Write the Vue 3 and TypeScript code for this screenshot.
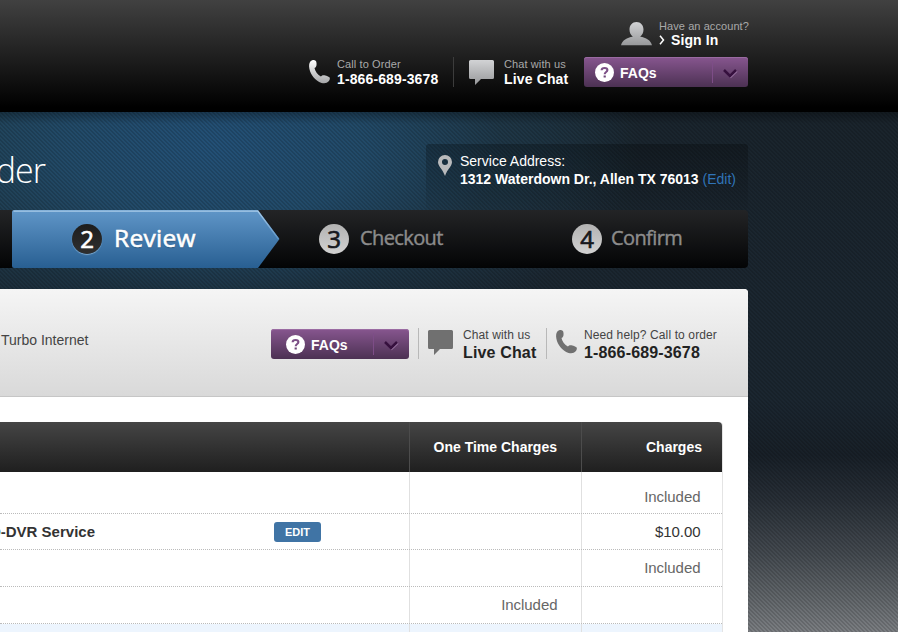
<script setup lang="ts">
interface ChargeRow {
  name: string
  editable: boolean
  once: string
  monthly: string
  height: number
}

interface Step {
  num: number
  label: string
  kind: string
}

const steps: Step[] = [
  { num: 2, label: 'Review', kind: 'active' },
  { num: 3, label: 'Checkout', kind: 'third' },
  { num: 4, label: 'Confirm', kind: 'fourth' },
]

const rows: ChargeRow[] = [
  { name: '', editable: false, once: '', monthly: 'Included', height: 42 },
  { name: 'D-DVR Service', editable: true, once: '', monthly: '$10.00', height: 36 },
  { name: '', editable: false, once: '', monthly: 'Included', height: 37 },
  { name: '', editable: false, once: 'Included', monthly: '', height: 37 },
  { name: '', editable: false, once: '', monthly: '', height: 37 },
]
</script>

<template>
  <div class="page">
    <header class="top">
      <div class="account">
        <svg class="user" width="31" height="24" viewBox="0 0 31 24">
          <defs>
            <linearGradient id="silver" x1="0" y1="0" x2="0" y2="1">
              <stop offset="0" stop-color="#d2d3d5" /><stop offset="1" stop-color="#97989a" />
            </linearGradient>
          </defs>
          <path fill="url(#silver)" d="M15.500 0c4.200 0 7 3.200 7 7.600 0 3-1.300 5.700-3.300 7.200C25 15.400 29.800 18.500 31 23.300H0c1.200-4.800 6-7.900 11.800-8.500C9.800 13.300 8.500 10.600 8.500 7.600 8.500 3.200 11.300 0 15.500 0z" />
        </svg>
        <div class="pair">
          <span class="small have">Have an account?</span>
          <span class="strong signin">
            <svg width="6" height="10" viewBox="0 0 6 10"><path d="M1 .7 4.500 5 1 9.300" fill="none" stroke="#fff" stroke-width="1.500" /></svg>
            Sign In
          </span>
        </div>
      </div>
      <div class="help">
        <svg class="phone" width="21" height="24" viewBox="0 0 21 24">
          <defs>
            <linearGradient id="handset" x1="0" y1="0" x2="0" y2="1">
              <stop offset="0" stop-color="#fff" /><stop offset="1" stop-color="#a5a6a8" />
            </linearGradient>
          </defs>
          <path fill="url(#handset)" d="M3.200.3C5.600-.3 7.300.5 7.500 3c.2 2.400-.1 4.200-2 5 .6 3.400 3.300 6.900 6.400 8.600 1.100-1.300 2.100-1.700 3.600-1.300 1.700.4 3.500 1.200 4.900 2 .9.800.4 2.600-.7 4-2.100 2.600-6.300 2.300-9.600.6C4.400 18.900.4 12.800.1 6.600 0 3.600.8 1.100 3.200.3z" />
        </svg>
        <div class="pair call">
          <span class="small order">Call to Order</span>
          <span class="strong number">1-866-689-3678</span>
        </div>
        <svg class="bubble" width="25" height="25" viewBox="0 0 25 25">
          <path fill="url(#silver)" d="M1.500 0h22A1.500 1.500 0 0 1 25 1.500v16a1.500 1.500 0 0 1-1.500 1.500H12l-6 6v-6H1.500A1.500 1.500 0 0 1 0 17.500v-16A1.500 1.500 0 0 1 1.500 0z" />
        </svg>
        <div class="pair chat">
          <span class="small with">Chat with us</span>
          <span class="strong live">Live Chat</span>
        </div>
        <button class="faq wide">
          <svg class="q" width="19" height="19" viewBox="0 0 19 19"><circle cx="9.500" cy="9.500" r="9.500" fill="#fff" /><path d="M6.600 7.300c.1-1.600 1.300-2.300 3-2.300 1.700 0 2.800.8 2.800 2.100 0 1.900-2.700 1.900-2.700 4.100" fill="none" stroke="#7d5087" stroke-width="2.100" /><rect x="8.600" y="12.500" width="2.200" height="2" fill="#6d4577" /></svg>
          <span class="faq-label">FAQs</span>
          <span class="drop"><svg width="15" height="11" viewBox="0 0 15 11"><path d="m7.200 9.800 6.800-6.500" fill="none" stroke="#9b76a4" stroke-width="1.400" /><path d="m1 2 6 6L13 2" fill="none" stroke="#36103e" stroke-width="2.500" /></svg></span>
        </button>
      </div>
    </header>

    <section class="hero">
      <div class="title-row">
        <h1>der</h1>
        <div class="address">
          <svg width="14" height="21" viewBox="0 0 14 21"><path fill="#b9babc" fill-rule="evenodd" d="M7 0a7 7 0 0 1 7 7c0 4.500-4.500 6.500-7 14C4.500 13.500 0 11.500 0 7a7 7 0 0 1 7-7zm0 4a3 3 0 1 0 0 6 3 3 0 0 0 0-6z" /></svg>
          <div class="address-text">
            <span class="svc">Service Address:</span>
            <span class="street"><b>1312 Waterdown Dr., Allen TX 76013</b> <a>(Edit)</a></span>
          </div>
        </div>
      </div>
      <nav class="steps">
        <div v-for="s in steps" :key="s.num" class="step" :class="s.kind">
          <svg v-if="s.kind === 'active'" class="arrow" width="268" height="58" viewBox="0 0 268 58">
            <defs>
              <linearGradient id="blue" x1="0" y1="0" x2="0" y2="1">
                <stop offset="0" stop-color="#6096c8" /><stop offset="1" stop-color="#285f92" />
              </linearGradient>
              <linearGradient id="edge" x1="0" y1="0" x2="0" y2="1">
                <stop offset="0" stop-color="#a9cbe8" /><stop offset="1" stop-color="#5f96c8" />
              </linearGradient>
            </defs>
            <path fill="url(#blue)" d="M2 0h244l21.500 29L246 58H2a2 2 0 0 1-2-2V2a2 2 0 0 1 2-2z" />
            <path fill="none" stroke="url(#edge)" stroke-width="1.300" d="M1.500 1.200h244.300L266.500 29" />
          </svg>
          <span class="badge">{{ s.num }}</span>
          <span class="label">{{ s.label }}</span>
        </div>
      </nav>
    </section>

    <main class="sheet">
      <div class="toolbar">
        <span class="plan">Turbo Internet</span>
        <button class="faq">
          <svg class="q" width="19" height="19" viewBox="0 0 19 19"><circle cx="9.500" cy="9.500" r="9.500" fill="#fff" /><path d="M6.600 7.300c.1-1.600 1.300-2.300 3-2.300 1.700 0 2.800.8 2.800 2.100 0 1.900-2.700 1.900-2.700 4.100" fill="none" stroke="#7d5087" stroke-width="2.100" /><rect x="8.600" y="12.500" width="2.200" height="2" fill="#6d4577" /></svg>
          <span class="faq-label">FAQs</span>
          <span class="drop"><svg width="15" height="11" viewBox="0 0 15 11"><path d="m7.200 9.800 6.800-6.500" fill="none" stroke="#9b76a4" stroke-width="1.400" /><path d="m1 2 6 6L13 2" fill="none" stroke="#36103e" stroke-width="2.500" /></svg></span>
        </button>
        <div class="contact first">
          <svg width="25" height="25" viewBox="0 0 25 25"><path fill="#707070" d="M1.500 0h22A1.500 1.500 0 0 1 25 1.500v16a1.500 1.500 0 0 1-1.500 1.500H12l-6 6v-6H1.500A1.500 1.500 0 0 1 0 17.500v-16A1.500 1.500 0 0 1 1.500 0z" /></svg>
          <div class="pair dark"><span class="small with2">Chat with us</span><span class="strong live2">Live Chat</span></div>
        </div>
        <div class="contact second">
          <svg width="21" height="24" viewBox="0 0 21 24"><path fill="#707070" d="M3.200.3C5.600-.3 7.300.5 7.500 3c.2 2.400-.1 4.200-2 5 .6 3.400 3.300 6.900 6.400 8.600 1.100-1.300 2.100-1.700 3.600-1.300 1.700.4 3.500 1.200 4.900 2 .9.800.4 2.600-.7 4-2.100 2.600-6.300 2.300-9.600.6C4.400 18.900.4 12.800.1 6.600 0 3.600.8 1.100 3.200.3z" /></svg>
          <div class="pair dark"><span class="small need">Need help? Call to order</span><span class="strong number2">1-866-689-3678</span></div>
        </div>
      </div>
      <div class="charges">
        <div class="grid head">
          <div class="cell"></div>
          <div class="cell one"><span>One Time Charges</span></div>
          <div class="cell chg"><span>Charges</span></div>
        </div>
        <div v-for="(r, i) in rows" :key="i" class="grid row" :class="{ tinted: i === 4 }" :style="{ height: r.height + 'px' }">
          <div class="cell item"><div v-if="r.name" class="name-clip"><b>{{ r.name }}</b></div><button v-if="r.editable" class="edit">EDIT</button></div>
          <div class="cell amount">{{ r.once }}</div>
          <div class="cell amount last" :class="{ price: r.monthly.startsWith('$') }">{{ r.monthly }}</div>
        </div>
      </div>
    </main>
  </div>
</template>

<style>
body { overflow: hidden; background: #18222b; }
</style>

<style scoped>
.page {
  box-sizing: border-box;
  width: 898px;
  height: 632px;
  overflow: hidden;
  font-family: "Liberation Sans", Arial, sans-serif;
  color: #fff;
  background:
    linear-gradient(to bottom, transparent 112px, rgba(0, 0, 0, .3) 112px, transparent 124px),
    repeating-linear-gradient(45deg, rgba(0, 0, 0, .14) 0 1.414px, rgba(0, 0, 0, 0) 1.414px 2.828px),
    linear-gradient(to bottom, rgba(22, 30, 38, 0) 400px, #182028 455px, #282f37 500px, #454b51 555px, #606569 595px, #7b7e82 632px),
    radial-gradient(ellipse 420px 220px at 215px 145px, #235076 0%, #224a68 35%, rgba(30, 56, 74, .7) 68%, rgba(26, 36, 46, 0) 100%),
    linear-gradient(to bottom, rgba(27, 38, 48, 0) 150px, #1b2630 290px),
    linear-gradient(to right, #255160 0, #233e4c 380px, #1a252e 640px, #1a242c 898px);
}
.top {
  box-sizing: border-box;
  height: 112px;
  padding: 20px 150px 0 0;
  background: linear-gradient(#414141, #000 96%);
}
.account { display: flex; justify-content: flex-end; height: 37px; }
.user { margin: 2px 7px 0 0; }
.pair { display: flex; flex-direction: column; white-space: nowrap; }
.small { font-size: 11px; line-height: 13px; color: #a9a9a9; }
.strong { font-size: 14px; line-height: 16px; font-weight: bold; color: #fff; }
.account .pair { width: 89px; }
.have { letter-spacing: .08px; }
.account .strong { line-height: 14px; letter-spacing: .1px; }
.signin { display: flex; align-items: center; gap: 6px; }
.help { display: flex; justify-content: flex-end; height: 30px; }
.phone { margin: 3px 7px 0 0; }
.call { box-sizing: border-box; width: 117px; height: 30px; border-right: 1px solid #3c3c3c; }
.pair.call, .pair.chat { padding-top: 1px; }
.bubble { margin: 3px 10px 0 15px; }
.chat { width: 80px; }
.order, .with { letter-spacing: .1px; }
.number { letter-spacing: .12px; }
.live { letter-spacing: .15px; }
.faq {
  box-sizing: border-box;
  display: flex;
  align-items: center;
  width: 138px;
  height: 30px;
  padding: 0 0 0 15px;
  border: 0;
  border-radius: 3px;
  color: #fff;
  font: bold 14px/16px "Liberation Sans", Arial, sans-serif;
  background: linear-gradient(#87568f, #4c3153);
  box-shadow: inset 0 1px 0 #9a6ba2;
}
.wide { width: 164px; padding-left: 11px; }
.q { margin-right: 6px; }
.faq-label { padding-top: 1px; }
.drop { display: flex; align-items: center; justify-content: center; width: 35px; height: 22px; margin-left: auto; border-left: 1px solid #7d4d87; }
.drop svg { margin-top: 2px; }
.hero { height: 177px; }
.title-row { display: flex; justify-content: space-between; width: 748px; height: 98px; }
h1 {
  width: 45px;
  margin: 33px 0 0;
  display: flex;
  justify-content: flex-end;
  white-space: nowrap;
  font: 300 34px/50px "Open Sans", sans-serif;
  letter-spacing: -1px;
}
.address {
  box-sizing: border-box;
  display: flex;
  width: 322px;
  height: 66px;
  margin-top: 32px;
  padding: 8px 0 0 12px;
  border-radius: 3px;
  background: linear-gradient(rgba(0, 0, 0, .26), rgba(0, 0, 0, .04));
}
.address svg { margin: 3px 8px 0 0; }
.address-text { display: flex; flex-direction: column; font-size: 14px; line-height: 18px; white-space: nowrap; }
a { color: #3074b8; }
.steps {
  display: flex;
  width: 748px;
  height: 58px;
  border-radius: 0 4px 4px 0;
  background: linear-gradient(#232426, #030405);
}
.step { position: relative; display: flex; align-items: center; font-family: "Open Sans", sans-serif; }
.active { width: 268px; margin-left: 12px; }
.arrow { position: absolute; left: 0; top: 0; }
.badge {
  position: relative;
  width: 30px;
  height: 30px;
  border-radius: 50%;
  font: 400 24px/29px "Open Sans", sans-serif;
  -webkit-text-stroke: .7px currentColor;
  text-align: center;
  color: #17181d;
  background: linear-gradient(#b2b2b2, #d2d2d2);
}
.active .badge { margin-left: 60px; color: #fff; background: linear-gradient(#1d1d1d, #2f2f2f); box-shadow: 0 1px 1px #7da9cf; }
.label { position: relative; margin: 0 0 2px 11px; font-size: 20px; font-weight: 400; line-height: 30px; letter-spacing: -.6px; color: #8c8c8c; -webkit-text-stroke: .4px currentColor; }
.active .label { margin-left: 12px; font-size: 24.500px; letter-spacing: .3px; color: #fff; text-shadow: 0 1px 1px rgba(0, 0, 0, .3); -webkit-text-stroke: .6px currentColor; }
.third { width: 253px; margin-left: 39px; }
.fourth .label { margin-left: 9px; }
.sheet { width: 748px; height: 343px; background: #fff; border-radius: 0 4px 0 0; overflow: hidden; }
.toolbar {
  box-sizing: border-box;
  display: flex;
  height: 108px;
  padding-top: 39px;
  border-bottom: 1px solid #c6c6c6;
  background: linear-gradient(#f5f5f5, #d9d9d9);
}
.toolbar .faq { margin-top: 1px; }
.plan { width: 270px; padding-left: 1px; font-size: 14px; line-height: 25px; color: #444; }
.contact { display: flex; height: 31px; border-left: 1px solid #b8b8b8; }
.first { width: 127px; margin-left: 9px; }
.first svg { margin: 2px 10px 0 9px; }
.second svg { margin: 2px 7px 0 9px; }
.dark .small { font-size: 12px; line-height: 14px; letter-spacing: .12px; color: #444; }
.dark .strong { padding-top: 1px; font-size: 16px; line-height: 20px; letter-spacing: .15px; color: #222; }
.charges { width: 722px; margin-top: 25px; box-shadow: 1px 0 0 #e4e4e4; border-radius: 0 4px 0 0; }
.grid { display: grid; grid-template-columns: 409px 172px 141px; box-sizing: border-box; }
.head { height: 50px; border-radius: 0 4px 0 0; background: linear-gradient(#454545, #1f1f1f); font-size: 14px; font-weight: bold; }
.cell { box-sizing: border-box; display: flex; align-items: center; }
.cell + .cell { border-left: 1px solid #e0e0e0; justify-content: flex-end; }
.head .cell + .cell { border-color: #4c4c4c; }
.one { padding-right: 24px; }
.chg { padding-right: 20px; }
.row { border-bottom: 1px dotted #bbb; color: #666; font-size: 15px; }
.amount { padding: 0 23.500px 1px 0; letter-spacing: -.05px; }
.last { padding-right: 21.500px; }
.row:nth-child(2) .amount { padding-top: 8px; }
.row .price { padding-bottom: 0; color: #333; }
.name-clip { display: flex; justify-content: flex-end; width: 95px; white-space: nowrap; color: #333; }
.edit { width: 47px; height: 20px; margin: 0 0 0 179px; padding: 0; border: 0; border-radius: 3px; background: #4074a5; color: #fff; font: bold 11px/20px "Liberation Sans", Arial, sans-serif; }
.tinted { background: #edf5fe; }
</style>
